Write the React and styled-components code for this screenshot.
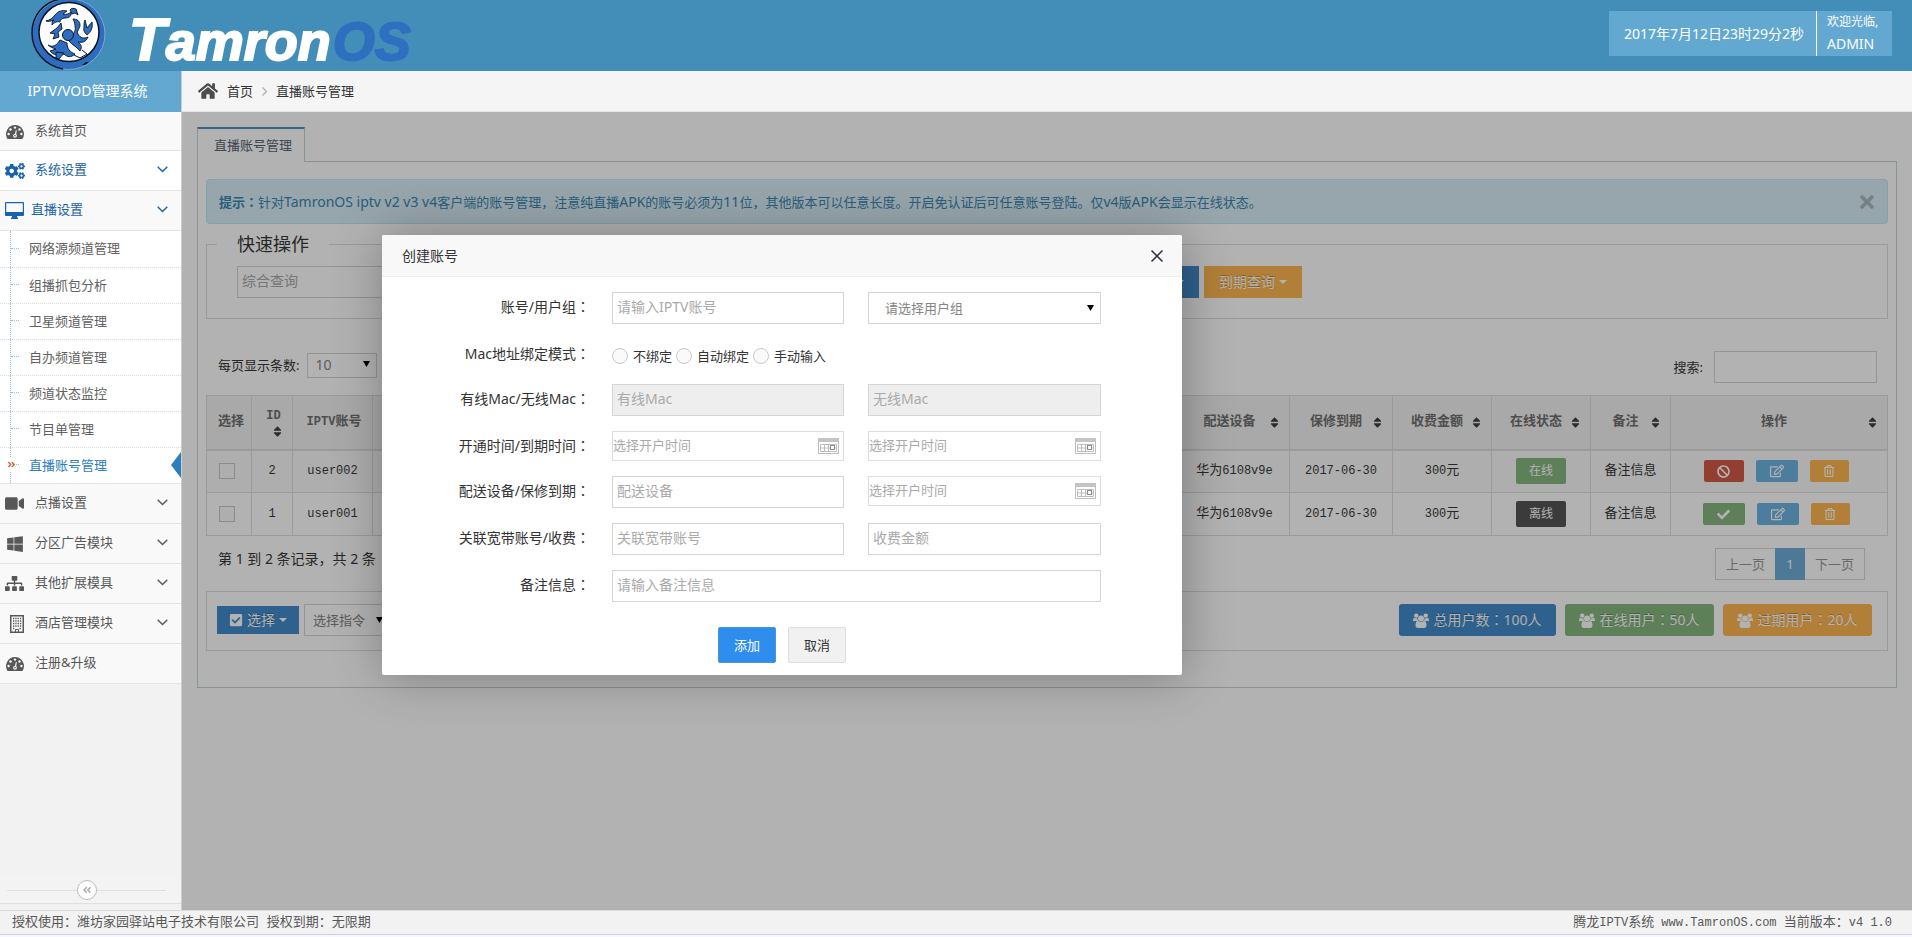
import React from "react";
import styled, { createGlobalStyle, css } from "styled-components";
import {
  FaCogs, FaVideo, FaWindows, FaSitemap, FaHome,
  FaRegEdit, FaRegTrashAlt, FaBan, FaCheck, FaCheckSquare, FaTimes, FaSort,
  FaAngleDoubleLeft, FaAngleDoubleRight,
} from "react-icons/fa";

const uiFont = `"Noto Sans", "Noto Sans CJK SC", sans-serif`;
const songFont = `"Liberation Mono", "Noto Sans CJK SC", monospace`;

const GlobalStyle = createGlobalStyle`
  * { box-sizing: border-box; }
  body {
    margin: 0;
    font: 13px/20px ${uiFont};
    color: #393939;
    background: #f5f8fe;
  }
  button, input, select { font: inherit; color: inherit; margin: 0; }
  button { cursor: pointer; }
  a { color: inherit; text-decoration: none; }
  svg { display: block; flex: none; }
`;

const Page = styled.div`
  display: flex;
  flex-direction: column;
  min-height: 100vh;
`;

/* ---------- header ---------- */
const Header = styled.header`
  display: flex;
  justify-content: space-between;
  align-items: flex-start;
  height: 71px;
  padding-right: 20px;
  background: #438eb9;
`;
const Brand = styled.a`
  display: flex;
  align-items: flex-start;
  gap: 22px;
  padding-left: 31px;
  white-space: nowrap;
`;
const BrandName = styled.span`
  padding-top: 6px;
  font: italic bold 54px/70px "Liberation Sans", sans-serif;
  color: #fff;
  -webkit-text-stroke: 2px currentColor;
`;
const BrandInitial = styled.span`
  font-size: 60px;
  line-height: 60px;
`;
const BrandSuffix = styled.span`
  margin-left: 2px;
  color: #2e6fc0;
`;
const UserBar = styled.div`
  display: flex;
  height: 45px;
  margin-top: 11px;
  background: #62a8d1;
  color: #fff;
  font-size: 14px;
`;
const Clock = styled.div`
  width: 208px;
  display: flex;
  align-items: center;
  justify-content: flex-end;
  padding-right: 12px;
  border-right: 1px solid #fff;
  white-space: nowrap;
`;
const Welcome = styled.div`
  width: 75px;
  padding-left: 10px;
  line-height: 22px;
`;
const Hello = styled.div`
  font-size: 12px;
`;

/* ---------- frame ---------- */
const Body = styled.div`
  flex: 1;
  display: flex;
`;
const Sidebar = styled.nav`
  flex: none;
  width: 182px;
  display: flex;
  flex-direction: column;
  background: #f2f2f2;
  border-right: 1px solid #ccc;
`;
const SideTitle = styled.div`
  height: 41px;
  line-height: 40px;
  padding-right: 6px;
  text-align: center;
  font-size: 14px;
  color: #fff;
  background: #62a8d1;
`;
const List = styled.ul`
  list-style: none;
  margin: 0;
  padding: 0;
`;
const MenuLink = styled.a`
  display: flex;
  align-items: center;
  gap: ${(p) => (p.$tight ? 7 : 11)}px;
  height: ${(p) => (p.$first ? 39 : 40)}px;
  padding: 0 13px 3px 5px;
  border-bottom: 1px solid #e5e5e5;
  background: ${(p) => (p.$plain ? "#fff" : "#f9f9f9")};
  color: ${(p) => (p.$blue ? "#1963aa" : "#585858")};
  svg:last-child { margin-left: auto; }
`;
const MenuIcon = styled.span`
  display: flex;
  justify-content: center;
  width: 19px;
  padding-top: 3px;
`;
const SubList = styled(List)`
  background: #fff;
  border-bottom: 1px solid #e5e5e5;
`;
const SubItem = styled.li`
  position: relative;
  & + & > a { border-top: 1px dotted #ddd; }
  &::before {
    content: "";
    position: absolute;
    top: 0;
    bottom: 0;
    left: 10px;
    border-left: 1px dotted #9dbdd6;
  }
`;
const Twig = styled.span`
  width: 8px;
  border-top: 1px dotted #9dbdd6;
`;
const SubLink = styled.a`
  display: flex;
  align-items: center;
  gap: 10px;
  height: 36px;
  padding: 0 0 2px 11px;
  color: ${(p) => (p.$active ? "#2b7dbc" : "#616161")};
`;
const ActiveMark = styled.span`
  position: absolute;
  left: 7px;
  top: 11px;
  padding: 2px 0;
  background: #fff;
  color: #c86139;
`;
const ActiveArrow = styled.svg`
  position: absolute;
  right: 0;
  top: 5px;
`;
const Collapse = styled.div`
  display: flex;
  align-items: center;
  margin-top: auto;
  margin-bottom: 6px;
  padding: 3px 15px 3px 7px;
  border-bottom: 1px solid #e0e0e0;
  background: #f3f3f3;
  &::before, &::after {
    content: "";
    flex: 1;
    border-top: 1px solid #e0e0e0;
  }
  &::before { max-width: 70px; }
`;
const CollapseButton = styled.button`
  display: flex;
  align-items: center;
  justify-content: center;
  width: 20px;
  height: 20px;
  padding: 0;
  border: 1px solid #bbb;
  border-radius: 50%;
  background: #fff;
  color: #aaa;
`;
const Main = styled.main`
  flex: 1;
  min-width: 0;
  display: flex;
  flex-direction: column;
`;
const Breadcrumb = styled.nav`
  display: flex;
  align-items: center;
  gap: 9px;
  height: 41px;
  padding-left: 16px;
  border-bottom: 1px solid #e5e5e5;
  background: #f5f5f5;
  color: #333;
`;
const Content = styled.div`
  position: relative;
  flex: 1;
  padding: 15px;
  background: #fff;
`;
const Shade = styled.div`
  position: absolute;
  inset: 0;
  background: rgba(0, 0, 0, 0.3);
`;
const Footer = styled.footer`
  display: flex;
  justify-content: space-between;
  height: 25px;
  margin-bottom: 2px;
  padding: 0 20px 0 12px;
  border-top: 1px solid #ddd;
  border-bottom: 1px solid #ccd2de;
  background: #f2f2f2;
  color: #585858;
  font-family: ${songFont};
  line-height: 23px;
`;
const Ascii = styled.span`
  font-size: 12px;
`;
const Latin = styled.span`
  font-size: 14px;
  line-height: 1;
`;
/* full-width punctuation centred in its cell */
const Mark = styled.span`
  font-family: "Noto Sans CJK TC", sans-serif;
  line-height: 1;
`;

/* ---------- panel ---------- */
const Tab = styled.button`
  display: block;
  position: relative;
  height: 35px;
  padding: 0 12px 2px 16px;
  margin-bottom: -1px;
  border: 1px solid #c5d0dc;
  border-top: 2px solid #4c8fbd;
  border-bottom: 0;
  background: #fff;
  color: #576373;
`;
const Panel = styled.section`
  padding: 17px 8px 36px;
  border: 1px solid #c5d0dc;
`;
const Alert = styled.div`
  display: flex;
  align-items: center;
  justify-content: space-between;
  height: 45px;
  padding: 0 10px 0 12px;
  margin-bottom: 8px;
  border: 1px solid #bce8f1;
  border-radius: 4px;
  background: #d9edf7;
  color: #3a87ad;
`;
const IconButton = styled.button`
  display: flex;
  padding: 0;
  border: 0;
  background: none;
  color: ${(p) => p.$color};
`;
const QuickSet = styled.fieldset`
  display: flex;
  gap: 5px;
  min-width: 0;
  margin: 0;
  padding: 10px 30px 20px;
  border: 1px solid #ddd;
`;
const Legend = styled.legend`
  margin-left: -20px;
  padding: 0 20px;
  font-size: 18px;
  line-height: 24px;
`;
const field = css`
  height: 32px;
  border: 1px solid #d5d5d5;
  border-radius: 0;
  background: #fff;
  color: #858585;
  font-size: 14px;
  outline: 0;
  &::placeholder { color: #aaa; opacity: 1; }
`;
const TextInput = styled.input`
  ${field}
  width: ${(p) => p.$w || "100%"};
  min-width: 0;
  padding: 0 4px 4px;
  &:disabled { background: #eee; }
`;
const Button = styled.button`
  display: inline-flex;
  align-items: center;
  justify-content: ${(p) => (p.$end ? "flex-end" : "center")};
  gap: 4px;
  height: ${(p) => p.$h || 32}px;
  min-width: ${(p) => p.$w || 0}px;
  padding: 0 ${(p) => (p.$end ? 15 : 0)}px 0 0;
  border: 0;
  border-radius: ${(p) => p.$r || 0}px;
  background: ${(p) => p.$bg};
  color: #fff;
  font-size: 14px;
  white-space: nowrap;
  text-shadow: 0 -1px 0 rgba(0, 0, 0, 0.25);
`;
const Bar = styled.div`
  display: flex;
  align-items: center;
  justify-content: space-between;
  padding: ${(p) => p.$pad};
`;
const Group = styled.div`
  display: flex;
  align-items: center;
  gap: ${(p) => p.$gap}px;
`;
const LengthGroup = styled(Group)`
  padding-bottom: 4px;
`;
const Summary = styled.p`
  margin: 0;
  font-size: 14px;
  line-height: 20px;
  padding-bottom: 10px;
`;
const SelectWrap = styled.span`
  position: relative;
  display: block;
  width: ${(p) => p.$w || "100%"};
  svg {
    position: absolute;
    right: 7px;
    top: ${(p) => (p.$short ? 8 : 13)}px;
    pointer-events: none;
  }
`;
const NativeSelect = styled.select`
  ${field}
  appearance: none;
  display: block;
  width: 100%;
  height: ${(p) => p.$h || 32}px;
  padding: 0 16px 0 ${(p) => p.$pl}px;
  font-size: ${(p) => p.$fs || 13}px;
`;
const Table = styled.table`
  width: 100%;
  table-layout: fixed;
  border-collapse: collapse;
  font-family: ${songFont};
  th, td { border: 1px solid #ddd; text-align: center; padding: 0; }
  th {
    height: 54px;
    padding: 0 8px 0 11px;
    border-bottom-width: 2px;
    background: #f2f2f2;
    color: #707070;
  }
  td { height: 43px; }
  tbody tr:first-child { background: #f9f9f9; }
`;
const HeadCell = styled.div`
  display: flex;
  align-items: ${(p) => (p.$stack ? "flex-end" : "center")};
  flex-direction: ${(p) => (p.$stack ? "column" : "row")};
  line-height: 18px;
  white-space: nowrap;
  & > span { flex: 1; align-self: stretch; }
`;
const Check = styled.input`
  appearance: none;
  display: block;
  width: 16px;
  height: 16px;
  margin: 0 auto 0 12px;
  border: 1px solid #c8c8c8;
  background: #fafafa;
`;
const Badge = styled.span`
  display: inline-block;
  width: 50px;
  height: 26px;
  border-radius: 2px;
  background: ${(p) => p.$bg};
  color: #fff;
  font: 12px/25px ${uiFont};
`;
const Actions = styled.div`
  display: flex;
  justify-content: center;
  gap: 12px;
  padding-right: 6px;
`;
const Pager = styled.nav`
  display: flex;
`;
const PageLink = styled.a`
  width: ${(p) => (p.$active ? 30 : 60)}px;
  height: 32px;
  line-height: 31px;
  text-align: center;
  border: 1px solid ${(p) => (p.$active ? "#6faed9" : "#d9d9d9")};
  border-width: 1px ${(p) => (p.$last || p.$active ? 1 : 0)}px 1px ${(p) => (p.$last ? 0 : 1)}px;
  background: ${(p) => (p.$active ? "#6faed9" : "#fff")};
  color: ${(p) => (p.$active ? "#fff" : "#999")};
`;
const CommandBox = styled(Bar)`
  border: 1px solid #ddd;
  padding: 12px 15px 14px 10px;
`;

/* ---------- dialog ---------- */
const Dialog = styled.section`
  position: absolute;
  left: 200px;
  top: 123px;
  width: 800px;
  border-radius: 2px;
  background: #fff;
  box-shadow: 1px 1px 50px rgba(0, 0, 0, 0.3);
  color: #333;
`;
const DialogTitle = styled.header`
  display: flex;
  align-items: center;
  justify-content: space-between;
  height: 42px;
  padding: 0 19px 0 20px;
  border-bottom: 1px solid #eee;
  border-radius: 2px 2px 0 0;
  background: #f8f8f8;
  font-size: 14px;
`;
const Form = styled.form`
  display: flex;
  flex-direction: column;
  gap: 15px;
  padding: 15px 81px 12px 0;
`;
const FormRow = styled.div`
  display: grid;
  grid-template-columns: 208px ${(p) => (p.$wide ? "1fr" : "232px 1fr")};
  column-gap: 22px;
  min-height: 30px;
  & > :nth-child(3) { margin-left: 2px; }
`;
const FormLabel = styled.label`
  font-size: 14px;
  line-height: 30px;
  text-align: right;
  white-space: nowrap;
`;
const Radios = styled.div`
  display: flex;
  align-items: center;
  gap: 4px;
  padding-top: 4px;
`;
const RadioLabel = styled.label`
  display: flex;
  align-items: center;
  gap: 5px;
  line-height: 26px;
`;
const Radio = styled.input`
  appearance: none;
  width: 16px;
  height: 16px;
  border: 1px solid #c8c8c8;
  border-radius: 50%;
  background: #fafafa;
`;
const DateBox = styled.div`
  display: flex;
  align-items: center;
  height: 30px;
  padding-right: 4px;
  border: 1px solid #ddd;
`;
const DateInput = styled.input`
  flex: 1;
  min-width: 0;
  padding: 0 0 2px;
  border: 0;
  outline: 0;
  background: none;
  &::placeholder { color: #aaa; opacity: 1; }
`;
const FormButtons = styled.div`
  display: flex;
  gap: 12px;
  margin-top: 10px;
  padding-left: 336px;
`;
const DialogButton = styled.button`
  width: 58px;
  height: 36px;
  padding: 0;
  border: 1px solid ${(p) => (p.$primary ? "#4898d5" : "#dedede")};
  border-radius: 2px;
  background: ${(p) => (p.$primary ? "#2e8ded" : "#f1f1f1")};
  color: ${(p) => (p.$primary ? "#fff" : "#333")};
`;

/* ---------- drawings ---------- */
const Chevron = () => (
  <svg width="11" height="7" viewBox="0 0 11 7" fill="none" stroke="currentColor" strokeWidth="1.4">
    <path d="M.7.8 5.5 5.6 10.3.8" />
  </svg>
);
const Caret = () => (
  <svg width="8" height="4" viewBox="0 0 8 4" fill="currentColor"><path d="M0 0h8L4 4z" /></svg>
);
const Triangle = () => (
  <svg width="7" height="6" viewBox="0 0 7 6" fill="#000"><path d="M0 0h7L3.5 6z" /></svg>
);
const Cross = () => (
  <svg width="12" height="12" viewBox="0 0 12 12" stroke="#2e2d3c" strokeWidth="1.5"><path d="M.5.5l11 11M11.5.5l-11 11" /></svg>
);
const DesktopIcon = () => (
  <svg width="19" height="17" viewBox="0 0 19 17" fill="currentColor">
    <path fillRule="evenodd" d="M1 0h17a1 1 0 0 1 1 1v12a1 1 0 0 1-1 1h-6v1.500h1V17H6v-1.500h1V14H1a1 1 0 0 1-1-1V1a1 1 0 0 1 1-1zm.2 1.200v8.800h16.600V1.200z" />
  </svg>
);
const GaugeIcon = () => (
  <svg width="18" height="15" viewBox="0 0 18 15">
    <path fill="currentColor" d="M9 1a9 9 0 0 0-7.600 13.700c.1.200.3.300.5.300h14.200c.2 0 .4-.1.500-.3A9 9 0 0 0 9 1z" />
    <g fill="#f9f9f9">
      <circle cx="2.600" cy="10" r="1.200" /><circle cx="4.500" cy="5.500" r="1.200" /><circle cx="9" cy="3.600" r="1.200" />
      <circle cx="13.500" cy="5.500" r="1.200" /><circle cx="15.400" cy="10" r="1.200" />
      <circle cx="9" cy="11.800" r="1.900" /><path d="M8.500 11.500 9.900 6l.9.200L10 12z" />
    </g>
    <circle cx="9" cy="11.800" r=".8" fill="currentColor" />
  </svg>
);
const BuildingIcon = () => (
  <svg width="14" height="18" viewBox="0 0 14 18" fill="none" stroke="currentColor">
    <rect x=".75" y=".75" width="12.500" height="16.500" strokeWidth="1.500" />
    <path d="M3 3.500h8.500M3 6h8.500M3 8.500h8.500M3 11h8.500M3 13.500h2M9.500 13.500h2" strokeWidth="1.300" strokeDasharray="1.300 1" />
    <path d="M5.500 17v-2.500h3V17" />
  </svg>
);
const GroupIcon = () => (
  <svg width="16" height="15" viewBox="0 0 16 15" fill="currentColor">
    <circle cx="3.200" cy="2.600" r="2.200" /><circle cx="12.800" cy="2.600" r="2.200" />
    <path d="M0 8.500C0 6 .4 4.800 1.300 4.800c.6.600 2.400.9 3.300.3A3.600 3.600 0 0 0 5 8H1.300C.5 8 0 8.500 0 8.500zM16 8.500c0-2.500-.4-3.700-1.300-3.700-.6.600-2.400.9-3.300.3A3.600 3.600 0 0 1 11 8h3.700c.8 0 1.300.5 1.300.5z" />
    <circle cx="8" cy="5.500" r="3" />
    <path d="M2.500 12.500c0-2.800.8-4.700 2.700-4.700 1.600 1.600 4 1.600 5.600 0 1.900 0 2.700 1.900 2.700 4.700 0 1.600-.9 2.500-2.300 2.500H4.800c-1.400 0-2.300-.9-2.300-2.500z" />
  </svg>
);
const Calendar = () => (
  <svg width="21" height="16" viewBox="0 0 21 16" fill="none" stroke="#bdbdbd">
    <path d="M0 0h21v4H0z" fill="#c4c4c4" stroke="none" />
    <path d="M.5 3v12.500h20V3M2.500 6.500h16v7h-16zM2.500 10h16M6.500 6.500v7M10.500 6.500v7" />
    <rect x="12.500" y="7.500" width="4" height="4" fill="#fff" stroke="#8c8c8c" />
  </svg>
);
const Logo = () => (
  <svg width="76" height="71" viewBox="0 0 76 71">
    <ellipse cx="37.500" cy="34" rx="36.500" ry="35.500" fill="#2d6cbf" stroke="#7fa9cf" />
    <path d="M30-1C12 2 1 16 1 33c0 19 14 33 31 36" fill="none" stroke="#0b1522" strokeWidth="1.500" />
    <ellipse cx="38" cy="32" rx="30" ry="29.500" fill="#fff" stroke="#0b1522" strokeWidth="1.500" />
    <g fill="#2d6cbf" stroke="#0b1522" strokeWidth=".9">
      <path d="M15 21c4-1 7-3 9-6 3-4 7-5 12-4l-4 3c3 1 6 0 8-2 1 4-2 6-6 6-3 0-5 2-5 4-4-1-6 1-8 3 0-2 0-4 2-5-3 1-6 2-8 1z" />
      <path d="M39 10c1-2 4-2 6-1l2 6-3-2-3 1z" />
      <path d="M42 19c4 0 7 2 7 6s-4 6-2 9c2 4 6 5 10 3-2 5-6 6-10 5 4 3 4 6 2 9-4-5-8-6-11-10 1-5 8-8 6-15 0-3-1-5-2-7z" />
      <path d="M54 20l2 8 5-6c1 6-1 10-5 13-2-2-4-4-3-8 0-3 0-5 1-7z" />
      <path d="M26 28l4-5 1 6-4 3 1 5-6 2 2-5-5-1z" />
      <path d="M17 45c5 3 9 0 12-5l7 3c0 6 3 9 8 11-4 4-8 3-11 0-6 2-11 1-14-3l6-2c-3-1-6-2-8-4z" />
      <path d="M25 52l8 1-5 6-3-1z" />
    </g>
    <circle cx="37" cy="35" r="5.500" fill="#2d6cbf" stroke="#0b1522" />
    <path d="M43 55l6 3 7-4-5-4" fill="none" stroke="#0b1522" />
    <path d="M51 65l4-3 3 0-4 3z" fill="#0b1522" />
  </svg>
);

/* ---------- data ---------- */
const subItems = ["网络源频道管理", "组播抓包分析", "卫星频道管理", "自办频道管理", "频道状态监控", "节目单管理", "直播账号管理"];
const lowerMenu = [
  ["点播设置", <FaVideo size={19} />, true],
  ["分区广告模块", <FaWindows size={18} />, true],
  ["其他扩展模具", <FaSitemap size={19} />, true],
  ["酒店管理模块", <BuildingIcon />, true],
  ["注册&升级", <GaugeIcon />, false],
];
const rows = [
  { id: "2", user: "user002", status: "在线", bg: "#87b87f", act: "#d15b47", w: 40, label: "禁用", icon: <FaBan size={13} /> },
  { id: "1", user: "user001", status: "离线", bg: "#555", act: "#87b87f", w: 42, label: "启用", icon: <FaCheck size={13} /> },
];
const stats = [
  ["总用户数", "100人", "#428bca", 157],
  ["在线用户", "50人", "#87b87f", 149],
  ["过期用户", "20人", "#ffb752", 149],
];

const Item = ({ icon, text, arrow, ...rest }) => (
  <MenuLink href="#" {...rest}>
    <MenuIcon>{icon}</MenuIcon>
    {text}
    {arrow && <Chevron />}
  </MenuLink>
);
const Th = ({ children, sort, stack }) => (
  <th scope="col">
    <HeadCell $stack={stack}>
      <span>{children}</span>
      {sort && <FaSort size={13} color="#3f3f3f" />}
    </HeadCell>
  </th>
);
const DateField = ({ id, label }) => (
  <DateBox>
    <DateInput id={id} aria-label={label} placeholder="选择开户时间" />
    <Calendar />
  </DateBox>
);
const Label = ({ children, ...rest }) => (
  <FormLabel {...rest}>{children}<Mark>：</Mark></FormLabel>
);

function AccountDialog() {
  return (
    <Dialog role="dialog" aria-labelledby="dialog-title">
      <DialogTitle>
        <span id="dialog-title">创建账号</span>
        <IconButton aria-label="关闭"><Cross /></IconButton>
      </DialogTitle>
      <Form>
        <FormRow>
          <Label htmlFor="account">账号/用户组</Label>
          <TextInput id="account" placeholder="请输入IPTV账号" />
          <SelectWrap $w="auto">
            <NativeSelect $pl={16} aria-label="用户组"><option>请选择用户组</option></NativeSelect>
            <Triangle />
          </SelectWrap>
        </FormRow>
        <FormRow $wide>
          <Label as="span">Mac地址绑定模式</Label>
          <Radios>
            {["不绑定", "自动绑定", "手动输入"].map((t) => (
              <RadioLabel key={t}><Radio type="radio" name="mac-mode" />{t}</RadioLabel>
            ))}
          </Radios>
        </FormRow>
        <FormRow>
          <Label htmlFor="lan">有线Mac/无线Mac</Label>
          <TextInput id="lan" placeholder="有线Mac" disabled />
          <TextInput $w="auto" aria-label="无线Mac" placeholder="无线Mac" disabled />
        </FormRow>
        <FormRow>
          <Label htmlFor="open-date">开通时间/到期时间</Label>
          <DateField id="open-date" />
          <DateField label="到期时间" />
        </FormRow>
        <FormRow>
          <Label htmlFor="device">配送设备/保修到期</Label>
          <TextInput id="device" placeholder="配送设备" />
          <DateField label="保修到期" />
        </FormRow>
        <FormRow>
          <Label htmlFor="broadband">关联宽带账号/收费</Label>
          <TextInput id="broadband" placeholder="关联宽带账号" />
          <TextInput $w="auto" aria-label="收费金额" placeholder="收费金额" />
        </FormRow>
        <FormRow $wide>
          <Label htmlFor="remark">备注信息</Label>
          <TextInput id="remark" placeholder="请输入备注信息" />
        </FormRow>
        <FormButtons>
          <DialogButton type="button" $primary>添加</DialogButton>
          <DialogButton type="button">取消</DialogButton>
        </FormButtons>
      </Form>
    </Dialog>
  );
}

function AccountTable() {
  return (
    <Table>
      <colgroup>
        {[45, 41, 80, null, 110, 103, 99, 99, 80, 217].map((w, i) => (
          <col key={i} width={w || undefined} />
        ))}
      </colgroup>
      <thead>
        <tr>
          <Th>选择</Th>
          <Th sort stack><Ascii>ID</Ascii></Th>
          <Th><Ascii>IPTV</Ascii>账号</Th>
          <Th />
          <Th sort>配送设备</Th>
          <Th sort>保修到期</Th>
          <Th sort>收费金额</Th>
          <Th sort>在线状态</Th>
          <Th sort>备注</Th>
          <Th sort>操作</Th>
        </tr>
      </thead>
      <tbody>
        {rows.map((r) => (
          <tr key={r.id}>
            <td><Check type="checkbox" aria-label={r.user} /></td>
            <td><Ascii>{r.id}</Ascii></td>
            <td><Ascii>{r.user}</Ascii></td>
            <td />
            <td>华为<Ascii>6108v9e</Ascii></td>
            <td><Ascii>2017-06-30</Ascii></td>
            <td><Ascii>300</Ascii>元</td>
            <td><Badge $bg={r.bg}>{r.status}</Badge></td>
            <td>备注信息</td>
            <td>
              <Actions>
                <Button $h={22} $r={2} $w={r.w} $bg={r.act} aria-label={r.label}>{r.icon}</Button>
                <Button $h={22} $r={2} $w={42} $bg="#6fb3e0" aria-label="编辑"><FaRegEdit size={14} /></Button>
                <Button $h={22} $r={2} $w={39} $bg="#ffb752" aria-label="删除"><FaRegTrashAlt size={12} /></Button>
              </Actions>
            </td>
          </tr>
        ))}
      </tbody>
    </Table>
  );
}

export default function App() {
  return (
    <Page>
      <GlobalStyle />
      <Header>
        <Brand href="#">
          <Logo />
          <BrandName><BrandInitial>T</BrandInitial>amron<BrandSuffix>OS</BrandSuffix></BrandName>
        </Brand>
        <UserBar>
          <Clock>2017年7月12日23时29分2秒</Clock>
          <Welcome><Hello>欢迎光临,</Hello>ADMIN</Welcome>
        </UserBar>
      </Header>
      <Body>
        <Sidebar>
          <SideTitle>IPTV/VOD管理系统</SideTitle>
          <List>
            <li><Item $first icon={<GaugeIcon />} text="系统首页" /></li>
            <li><Item $blue $plain icon={<FaCogs size={20} />} text="系统设置" arrow /></li>
            <li>
              <Item $blue $tight icon={<DesktopIcon />} text="直播设置" arrow />
              <SubList>
                {subItems.map((t, i) => {
                  const active = i === subItems.length - 1;
                  return (
                    <SubItem key={t}>
                      <SubLink href="#" $active={active}><Twig />{t}</SubLink>
                      {active && (
                        <>
                          <ActiveMark><FaAngleDoubleRight size={9} /></ActiveMark>
                          <ActiveArrow width="10" height="26" viewBox="0 0 10 26" fill="#2b7dbc"><path d="M10 0v26L0 13z" /></ActiveArrow>
                        </>
                      )}
                    </SubItem>
                  );
                })}
              </SubList>
            </li>
            {lowerMenu.map(([text, icon, arrow]) => (
              <li key={text}><Item icon={icon} text={text} arrow={arrow} /></li>
            ))}
          </List>
          <Collapse>
            <CollapseButton aria-label="收起菜单"><FaAngleDoubleLeft size={10} /></CollapseButton>
          </Collapse>
        </Sidebar>
        <Main>
          <Breadcrumb>
            <FaHome size={20} color="#4c4c4c" />
            <a href="#">首页</a>
            <svg width="5" height="9" viewBox="0 0 5 9" fill="none" stroke="#b2b6bf" strokeWidth="1.500"><path d="M.5.5l4 4-4 4" /></svg>
            <span>直播账号管理</span>
          </Breadcrumb>
          <Content>
            <Tab>直播账号管理</Tab>
            <Panel>
              <Alert>
                <span>
                  <b>提示<Mark>：</Mark></b>针对<Latin>TamronOS iptv v2 v3 v4</Latin>客户端的账号管理，注意纯直播<Latin>APK</Latin>的账号必须为<Latin>11</Latin>位，其他版本可以任意长度。开启免认证后可任意账号登陆。仅<Latin>v4</Latin>版<Latin>APK</Latin>会显示在线状态。
                </span>
                <IconButton $color="#aab9c1" aria-label="关闭提示"><FaTimes size={20} /></IconButton>
              </Alert>
              <QuickSet>
                <Legend>快速操作</Legend>
                <TextInput $w="859px" aria-label="综合查询" placeholder="综合查询" />
                <Button $end $w={98} $bg="#428bca" aria-label="查询"><Caret /></Button>
                <Button $w={98} $bg="#ffb752">到期查询<Caret /></Button>
              </QuickSet>
              <Bar $pad="32px 11px 12px 12px">
                <LengthGroup $gap={8}>
                  <label htmlFor="page-size">每页显示条数:</label>
                  <SelectWrap $w="70px" $short>
                    <NativeSelect id="page-size" $h={25} $pl={7} $fs={14}><option>10</option></NativeSelect>
                    <Triangle />
                  </SelectWrap>
                </LengthGroup>
                <Group $gap={11}>
                  <label htmlFor="search">搜索:</label>
                  <TextInput id="search" $w="163px" />
                </Group>
              </Bar>
              <AccountTable />
              <Bar $pad="12px 23px 11px 12px">
                <Summary>第 1 到 2 条记录，共 2 条</Summary>
                <Pager>
                  <PageLink href="#">上一页</PageLink>
                  <PageLink href="#" $active>1</PageLink>
                  <PageLink href="#" $last>下一页</PageLink>
                </Pager>
              </Bar>
              <CommandBox>
                <Group $gap={5}>
                  <Button $h={28} $w={82} $bg="#428bca"><FaCheckSquare size={14} />选择<Caret /></Button>
                  <SelectWrap $w="86px">
                    <NativeSelect $pl={8} aria-label="指令"><option>选择指令</option></NativeSelect>
                    <Triangle />
                  </SelectWrap>
                </Group>
                <Group $gap={9}>
                  {stats.map(([name, count, bg, w]) => (
                    <Button key={name} $w={w} $r={3} $bg={bg}>
                      <GroupIcon />
                      <span>{name}<Mark>：</Mark>{count}</span>
                    </Button>
                  ))}
                </Group>
              </CommandBox>
            </Panel>
            <Shade />
            <AccountDialog />
          </Content>
        </Main>
      </Body>
      <Footer>
        <span>授权使用：潍坊家园驿站电子技术有限公司 授权到期：无限期</span>
        <span>腾龙<Ascii>IPTV</Ascii>系统<Ascii> www.TamronOS.com </Ascii>当前版本：<Ascii>v4 1.0</Ascii></span>
      </Footer>
    </Page>
  );
}
